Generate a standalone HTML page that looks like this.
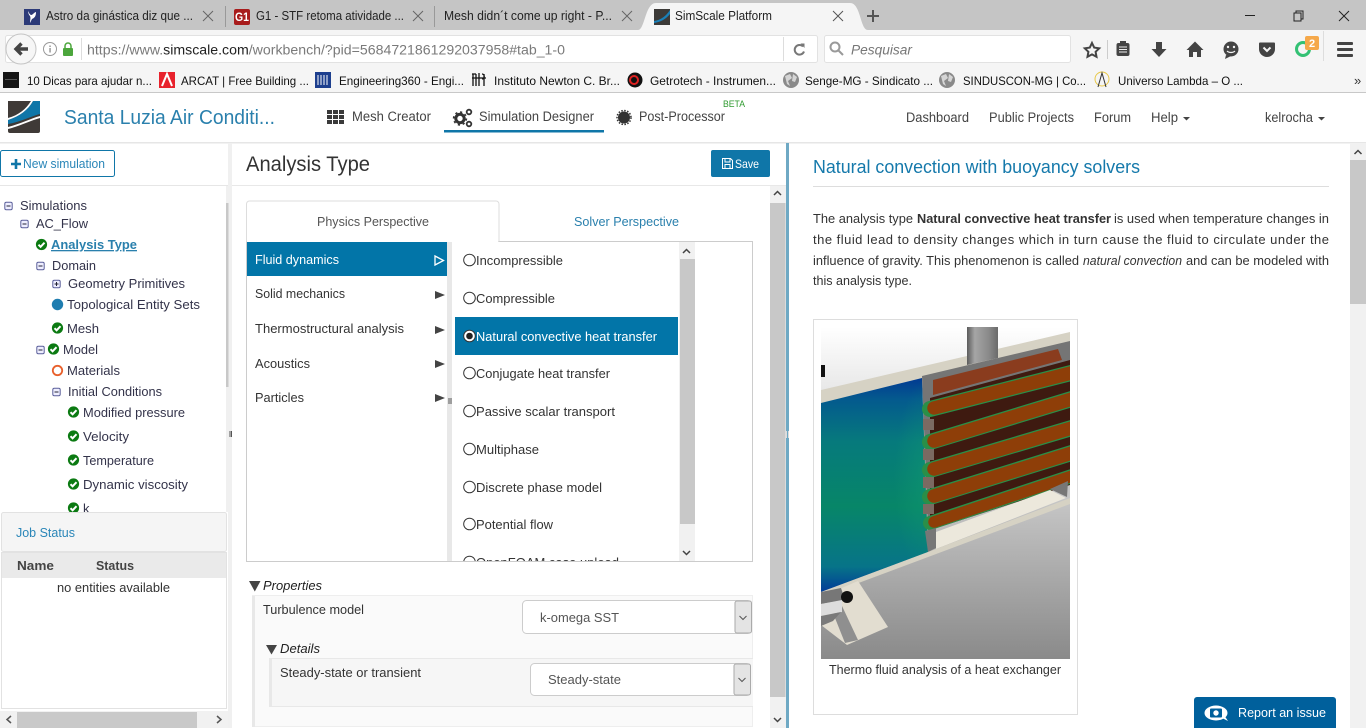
<!DOCTYPE html>
<html lang="pt"><head><meta charset="utf-8"><title>SimScale Platform</title>
<style>
html,body{margin:0;padding:0;background:#fff;overflow:hidden}
svg{display:block}
text{font-family:"Liberation Sans",sans-serif;font-size:13px;fill:#333;white-space:pre}
.tb{font-size:12.5px;fill:#222}
.bm{font-size:12px;fill:#111}
.tr{font-size:13px;fill:#33334a}
.nv{font-size:13.5px;fill:#444}
.mn{font-size:13px;fill:#333}
.op{font-size:12.5px;fill:#333}
.ar{fill:#444}
</style></head><body>
<svg xmlns="http://www.w3.org/2000/svg" width="1366" height="728" viewBox="0 0 1366 728">
<defs>
<g id="ck"><circle r="5.6" fill="#0b7a12"/><path d="M-3 .2 -.9 2.3 3 -1.8" fill="none" stroke="#fff" stroke-width="2"/></g>
<g id="mi"><rect x="-3.7" y="-3.7" width="7.4" height="7.4" rx="1.5" fill="#eef" stroke="#5a5f9a"/><path d="M-2 0H2" stroke="#223" stroke-width="1"/></g>
<g id="gl"><circle r="8" fill="#8a8a8a"/><path d="M-6 -4 -1 -6 1 -2 -3 1 -1 6 -4 4ZM2 -6 6 -3 4 2 1 1Z" fill="#d5d5d5"/></g>
<clipPath id="c1"><rect x="452" y="242" width="227" height="319"/></clipPath>
<clipPath id="c2"><rect x="821" y="327" width="249" height="332"/></clipPath>
<clipPath id="c3"><rect x="0" y="190" width="226" height="322"/></clipPath>
<linearGradient id="fl" gradientUnits="userSpaceOnUse" x1="0" y1="500" x2="0" y2="659"><stop offset="0" stop-color="#c6c6c6"/><stop offset="1" stop-color="#8a8a8a"/></linearGradient>
<linearGradient id="sk" x1="0" y1="0" x2="0" y2="1"><stop offset="0" stop-color="#fff"/><stop offset="1" stop-color="#e6e6e6"/></linearGradient>
<linearGradient id="bl" x1="0" y1="0" x2="0" y2="1"><stop offset="0" stop-color="#023a92"/><stop offset=".1" stop-color="#045a8e"/><stop offset=".3" stop-color="#067a7c"/><stop offset=".6" stop-color="#078668"/><stop offset=".88" stop-color="#077488"/><stop offset="1" stop-color="#023c98"/></linearGradient>
<radialGradient id="gr" cx="1" cy=".5" r=".5"><stop offset="0" stop-color="#14a070" stop-opacity=".45"/><stop offset="1" stop-color="#14a070" stop-opacity="0"/></radialGradient>
<linearGradient id="pp" x1="0" y1="0" x2="1" y2="0"><stop offset="0" stop-color="#5c5c5c"/><stop offset=".25" stop-color="#a5a5a5"/><stop offset=".7" stop-color="#8a8a8a"/><stop offset="1" stop-color="#6a6a6a"/></linearGradient>
</defs>

<!-- browser chrome -->
<rect width="1366" height="30" fill="#c5c5c5"/>
<rect y="30" width="1366" height="63" fill="#f5f5f5"/>
<rect y="92" width="1366" height="1" fill="#c8c8c8"/>
<path d="M638 30C645 30 645 3 656 3H850C861 3 860 30 868 30Z" fill="#f5f5f5"/>
<rect x="24" y="9" width="16" height="16" fill="#2c3a78"/><path d="M28 11c2 4 3 5 5 3s3-2 3-2c0 5-2 6-4 7l-2 4c0-3 1-5 0-7-1-1-2-3-2-5z" fill="#fff"/>
<text class="tb" x="46" y="20" textLength="147" lengthAdjust="spacingAndGlyphs">Astro da ginástica diz que ...</text>
<path d="M203 11 213 21M213 11 203 21" stroke="#666" fill="none"/>
<rect x="225" y="6" width="1" height="21" fill="#999"/>
<rect x="234" y="9" width="16" height="16" rx="2" fill="#a81c1c"/><text x="235" y="21" textLength="14" lengthAdjust="spacingAndGlyphs" style="font-size:12px;font-weight:bold;fill:#fff">G1</text>
<text class="tb" x="256" y="20" textLength="148" lengthAdjust="spacingAndGlyphs">G1 - STF retoma atividade ...</text>
<path d="M413 11 423 21M423 11 413 21" stroke="#666" fill="none"/>
<rect x="434" y="6" width="1" height="21" fill="#999"/>
<text class="tb" x="444" y="20" textLength="168" lengthAdjust="spacingAndGlyphs">Mesh didn´t come up right - P...</text>
<path d="M622 11 632 21M632 11 622 21" stroke="#666" fill="none"/>
<rect x="654" y="9" width="16" height="16" fill="#3c3a38"/><path d="M654 21C661 20 666 16 670 10V14C666 19 661 22 654 23Z" fill="#1a80b8"/>
<text class="tb" x="675" y="20" textLength="97" lengthAdjust="spacingAndGlyphs">SimScale Platform</text>
<path d="M833 11 843 21M843 11 833 21" stroke="#555" fill="none"/>
<path d="M873 10V22M867 16H879" stroke="#555" stroke-width="2"/>
<rect x="1245" y="15" width="10" height="1" fill="#222"/>
<path d="M1294 13h7v8h-7zM1296 13v-2h7v8h-2" fill="none" stroke="#222"/>
<path d="M1339 11 1349 21M1349 11 1339 21" stroke="#222" fill="none"/>

<rect x="5.500" y="35.500" width="812" height="27" rx="2" fill="#fff" stroke="#e2e2e2"/>
<circle cx="21" cy="49" r="15" fill="#f6f6f6" stroke="#c4c4c4"/>
<path d="M28 49H17M21.500 43.500 16 49 21.500 54.500" fill="none" stroke="#444" stroke-width="3.400"/>
<circle cx="50" cy="49" r="6.500" fill="none" stroke="#999"/><rect x="49.300" y="48" width="1.500" height="4.500" fill="#999"/><rect x="49.300" y="45.500" width="1.500" height="1.500" fill="#999"/>
<rect x="63" y="48" width="10" height="8" rx="1" fill="#4ca63c"/><path d="M65 48V46a3 3 0 0 1 6 0V48" fill="none" stroke="#4ca63c" stroke-width="1.500"/>
<rect x="81" y="38" width="1" height="22" fill="#ddd"/>
<text x="87" y="54.500" textLength="478" lengthAdjust="spacingAndGlyphs" style="font-size:13.5px;fill:#7a7a7a">https://www.<tspan fill="#222">simscale.com</tspan>/workbench/?pid=5684721861292037958#tab_1-0</text>
<rect x="783" y="37" width="1" height="24" fill="#ddd"/>
<path d="M803 46.500A4.800 4.800 0 1 0 804 51.500" fill="none" stroke="#777" stroke-width="2"/><path d="M800.500 43.500 804.500 43.500 804.500 48Z" fill="#777"/>
<rect x="824.500" y="35.500" width="246" height="27" rx="2" fill="#fff" stroke="#e2e2e2"/>
<circle cx="835" cy="47" r="4.500" fill="none" stroke="#999" stroke-width="2"/><path d="M838 50 843 55" stroke="#999" stroke-width="2"/>
<text x="851" y="54.500" textLength="61" lengthAdjust="spacingAndGlyphs" style="font-size:13.5px;font-style:italic;fill:#777">Pesquisar</text>
<path d="M1092 43l2.200 4.600 5 .7-3.600 3.500.9 5-4.500-2.400-4.500 2.400.9-5-3.600-3.500 5-.7z" fill="none" stroke="#444" stroke-width="2"/>
<rect x="1107" y="40" width="1" height="19" fill="#ccc"/>
<rect x="1116.500" y="43" width="13" height="13" rx="2" fill="#444"/><rect x="1120" y="41" width="6" height="3" fill="#444"/><path d="M1119 47h8M1119 49.500h8M1119 52h8" stroke="#eee" stroke-width="1"/>
<path d="M1156 42h6v7h4.500L1159 57l-7.500-8H1156z" fill="#444"/>
<path d="M1195 41.500 1203.500 50H1201V57H1197V52H1193V57H1189V50H1186.500z" fill="#444"/>
<circle cx="1231" cy="49" r="7.500" fill="#444"/><path d="M1226 55 1225 59 1231 56Z" fill="#444"/><circle cx="1228" cy="47" r="1.200" fill="#f5f5f5"/><circle cx="1234" cy="47" r="1.200" fill="#f5f5f5"/><path d="M1227 51c2 2 6 2 8 0" stroke="#f5f5f5" stroke-width="1.200" fill="none"/>
<path d="M1260 42.500h14a1 1 0 0 1 1 1V49a8 8 0 0 1-16 0V43.500a1 1 0 0 1 1-1z" fill="#444"/><path d="M1263.500 47.500 1267 51 1270.500 47.500" fill="none" stroke="#f5f5f5" stroke-width="2"/>
<circle cx="1303" cy="49" r="6.500" fill="none" stroke="#33c174" stroke-width="3"/>
<rect x="1305" y="36" width="14" height="14" rx="2" fill="#f5a84a"/><text x="1309" y="47" style="font-size:11px;font-weight:bold;fill:#fff">2</text>
<rect x="1323" y="31" width="1" height="30" fill="#ddd"/>
<rect x="1337" y="42" width="16" height="3" rx="1" fill="#444"/><rect x="1337" y="48" width="16" height="3" rx="1" fill="#444"/><rect x="1337" y="54" width="16" height="3" rx="1" fill="#444"/>

<!-- bookmarks -->
<rect x="3" y="72" width="16" height="16" fill="#151515"/><rect x="5" y="79" width="12" height="1" fill="#555"/>
<text class="bm" x="27" y="85" textLength="125" lengthAdjust="spacingAndGlyphs">10 Dicas para ajudar n...</text>
<rect x="159" y="72" width="16" height="16" fill="#e8222c"/><path d="M162 86 167 74 172 86" fill="none" stroke="#fff" stroke-width="2"/>
<text class="bm" x="181" y="85" textLength="128" lengthAdjust="spacingAndGlyphs">ARCAT | Free Building ...</text>
<rect x="315" y="72" width="16" height="16" fill="#1d3f8e"/><path d="M318 75v10M321 75v10M324 75v10M327 75v10" stroke="#fff"/>
<text class="bm" x="339" y="85" textLength="125" lengthAdjust="spacingAndGlyphs">Engineering360 - Engi...</text>
<path d="M472 74h4M473 74v12M476 74v12M479 73v13M482 74c3 0 3 5 0 5M484 74v12M472 78h14" stroke="#111" stroke-width="1.300" fill="none"/>
<text class="bm" x="494" y="85" textLength="126" lengthAdjust="spacingAndGlyphs">Instituto Newton C. Br...</text>
<circle cx="635" cy="80" r="7.500" fill="#111"/><circle cx="634" cy="80" r="4" fill="none" stroke="#d22" stroke-width="2"/>
<text class="bm" x="650" y="85" textLength="126" lengthAdjust="spacingAndGlyphs">Getrotech - Instrumen...</text>
<use href="#gl" x="791" y="80"/>
<text class="bm" x="805" y="85" textLength="128" lengthAdjust="spacingAndGlyphs">Senge-MG - Sindicato ...</text>
<use href="#gl" x="947" y="80"/>
<text class="bm" x="963" y="85" textLength="123" lengthAdjust="spacingAndGlyphs">SINDUSCON-MG | Co...</text>
<circle cx="1102" cy="79" r="7" fill="none" stroke="#e8c848"/><path d="M1098 87 1102 73 1106 87" fill="none" stroke="#333"/>
<text class="bm" x="1118" y="85" textLength="125" lengthAdjust="spacingAndGlyphs">Universo Lambda – O ...</text>
<text x="1354" y="85" style="font-size:13px;fill:#333">»</text>

<!-- app header -->
<rect y="93" width="1366" height="50" fill="#fff"/>
<rect y="142" width="1366" height="1.500" fill="#e6e6e6"/>
<path d="M8 101H40V131a2 2 0 0 1-2 2H10a2 2 0 0 1-2-2Z" fill="#3f3a37"/>
<path d="M40 101V114C32 116 20 122 8 124V120C20 116 28 110 33 101Z" fill="#0f76a8"/>
<path d="M33 101C28 110 20 116 8 120V118C19 115 26 109 31 101Z" fill="#fff"/>
<path d="M8 127C20 124 32 118 40 116V118C32 120 20 126 8 129Z" fill="#fff"/>
<text x="64" y="124" textLength="211" lengthAdjust="spacingAndGlyphs" style="font-size:20.5px;fill:#2a80ad">Santa Luzia Air Conditi...</text>
<g fill="#3a3a3a"><rect x="327" y="110" width="5" height="4"/><rect x="333" y="110" width="5" height="4"/><rect x="339" y="110" width="5" height="4"/><rect x="327" y="115" width="5" height="4"/><rect x="333" y="115" width="5" height="4"/><rect x="339" y="115" width="5" height="4"/><rect x="327" y="120" width="5" height="4"/><rect x="333" y="120" width="5" height="4"/><rect x="339" y="120" width="5" height="4"/></g>
<text class="nv" x="352" y="121" textLength="79" lengthAdjust="spacingAndGlyphs">Mesh Creator</text>
<circle cx="460" cy="118.500" r="4.200" fill="none" stroke="#333" stroke-width="3"/>
<circle cx="460" cy="118.500" r="6.400" fill="none" stroke="#333" stroke-width="1.600" stroke-dasharray="2.200 2.800"/>
<circle cx="469" cy="112" r="2.300" fill="none" stroke="#333" stroke-width="1.800"/>
<circle cx="469" cy="124" r="2.300" fill="none" stroke="#333" stroke-width="1.800"/>
<text class="nv" x="479" y="121" textLength="115" lengthAdjust="spacingAndGlyphs">Simulation Designer</text>
<rect x="444" y="130" width="160" height="2.500" fill="#0f76a8"/>
<circle cx="624" cy="117.500" r="6" fill="#333"/><circle cx="624" cy="117.500" r="7" fill="none" stroke="#333" stroke-width="1.500" stroke-dasharray="1.500 1.500"/>
<text class="nv" x="639" y="121" textLength="86" lengthAdjust="spacingAndGlyphs">Post-Processor</text>
<text x="723" y="107" textLength="22" lengthAdjust="spacingAndGlyphs" style="font-size:9px;fill:#2f9a2f">BETA</text>
<text class="nv" x="906" y="122" textLength="63" lengthAdjust="spacingAndGlyphs">Dashboard</text>
<text class="nv" x="989" y="122" textLength="85" lengthAdjust="spacingAndGlyphs">Public Projects</text>
<text class="nv" x="1094" y="122" textLength="37" lengthAdjust="spacingAndGlyphs">Forum</text>
<text class="nv" x="1151" y="122" textLength="27" lengthAdjust="spacingAndGlyphs">Help</text>
<path d="M1183 117h7l-3.500 3.500z" fill="#444"/>
<text class="nv" x="1265" y="122" textLength="48" lengthAdjust="spacingAndGlyphs">kelrocha</text>
<path d="M1318 117h7l-3.500 3.500z" fill="#444"/>

<!-- left panel -->
<rect x="228" y="143" width="4" height="585" fill="#f0f0f0"/>
<rect x=".5" y="150.500" width="114" height="26" rx="2" fill="#fff" stroke="#0f76a8"/>
<path d="M16 159V169M11 164H21" stroke="#0f76a8" stroke-width="2.600"/>
<text x="23" y="168" textLength="82" lengthAdjust="spacingAndGlyphs" style="font-size:12.5px;fill:#2a86b8">New simulation</text>
<rect y="185" width="228" height="1" fill="#e6e6e6"/>
<rect x="226" y="186" width="2.500" height="326" fill="#f0f0f0"/><rect x="226" y="203" width="2.500" height="184" fill="#c8c8c8"/>
<g clip-path="url(#c3)">
<use href="#mi" x="8.500" y="206"/><text class="tr" x="20" y="210" textLength="67" lengthAdjust="spacingAndGlyphs">Simulations</text>
<use href="#mi" x="24.500" y="224"/><text class="tr" x="36" y="228" textLength="52" lengthAdjust="spacingAndGlyphs">AC_Flow</text>
<use href="#ck" x="41.500" y="244.500"/><text x="51" y="249" textLength="86" lengthAdjust="spacingAndGlyphs" style="font-size:13px;font-weight:bold;fill:#2a80ad;text-decoration:underline">Analysis Type</text>
<use href="#mi" x="40.500" y="266"/><text class="tr" x="52" y="270" textLength="44" lengthAdjust="spacingAndGlyphs">Domain</text>
<use href="#mi" x="56.500" y="284"/><path d="M56.500 282V286" stroke="#223"/><text class="tr" x="68" y="288" textLength="117" lengthAdjust="spacingAndGlyphs">Geometry Primitives</text>
<circle cx="57.500" cy="304.500" r="5.700" fill="#1f7db0"/><text class="tr" x="67" y="309" textLength="133" lengthAdjust="spacingAndGlyphs">Topological Entity Sets</text>
<use href="#ck" x="57.500" y="328"/><text class="tr" x="67" y="333" textLength="32" lengthAdjust="spacingAndGlyphs">Mesh</text>
<use href="#mi" x="40.500" y="350"/><use href="#ck" x="53.500" y="349"/><text class="tr" x="63" y="354" textLength="35" lengthAdjust="spacingAndGlyphs">Model</text>
<circle cx="57.500" cy="370.500" r="4.700" fill="none" stroke="#e8602c" stroke-width="1.800"/><text class="tr" x="67" y="375" textLength="53" lengthAdjust="spacingAndGlyphs">Materials</text>
<use href="#mi" x="56.500" y="392"/><text class="tr" x="68" y="396" textLength="94" lengthAdjust="spacingAndGlyphs">Initial Conditions</text>
<use href="#ck" x="73.500" y="412"/><text class="tr" x="83" y="417" textLength="102" lengthAdjust="spacingAndGlyphs">Modified pressure</text>
<use href="#ck" x="73.500" y="436"/><text class="tr" x="83" y="441" textLength="46" lengthAdjust="spacingAndGlyphs">Velocity</text>
<use href="#ck" x="73.500" y="460"/><text class="tr" x="83" y="465" textLength="71" lengthAdjust="spacingAndGlyphs">Temperature</text>
<use href="#ck" x="73.500" y="484"/><text class="tr" x="83" y="489" textLength="105" lengthAdjust="spacingAndGlyphs">Dynamic viscosity</text>
<use href="#ck" x="73.500" y="508"/><text class="tr" x="83" y="513">k</text>
</g>
<path d="M230 431v6M231.500 431v6" stroke="#555"/>
<rect x="1.500" y="512.500" width="225" height="39" rx="2" fill="#f5f5f5" stroke="#e2e2e2"/>
<text x="16" y="537" textLength="59" lengthAdjust="spacingAndGlyphs" style="font-size:13px;fill:#2a86b8">Job Status</text>
<rect x="1.500" y="552.500" width="225" height="156" fill="#fff" stroke="#e2e2e2"/>
<rect x="2" y="553" width="224" height="25" fill="#eaeaea"/>
<text x="17" y="570" textLength="37" lengthAdjust="spacingAndGlyphs" style="font-size:13px;font-weight:bold;fill:#444">Name</text>
<text x="96" y="570" textLength="38" lengthAdjust="spacingAndGlyphs" style="font-size:13px;font-weight:bold;fill:#444">Status</text>
<text x="57" y="592" textLength="113" lengthAdjust="spacingAndGlyphs" style="font-size:12.5px;fill:#333">no entities available</text>
<rect y="711" width="228" height="17" fill="#f1f1f1"/>
<rect x="17" y="712" width="180" height="16" fill="#c9c9c9"/>
<path d="M11 716 7 719.500 11 723" fill="none" stroke="#555" stroke-width="1.500"/><path d="M217 716 221 719.500 217 723" fill="none" stroke="#555" stroke-width="1.500"/>

<!-- center panel -->
<text x="246" y="171" textLength="124" lengthAdjust="spacingAndGlyphs" style="font-size:21px;fill:#333">Analysis Type</text>
<rect x="232" y="185" width="554" height="1" fill="#e8e8e8"/>
<rect x="711" y="150" width="59" height="27" rx="2" fill="#0f76a8"/>
<path d="M722.500 158.500h8l2 2v8h-10z M725 159v3h5v-3 M725 168.500v-4h5v4" fill="none" stroke="#fff"/>
<text x="735" y="168" textLength="24" lengthAdjust="spacingAndGlyphs" style="font-size:12px;fill:#fff">Save</text>

<rect x="246.500" y="241.500" width="506" height="320" fill="#fff" stroke="#ccc"/>
<path d="M246.500 241.500V204a3 3 0 0 1 3-3H496a3 3 0 0 1 3 3V241.500" fill="#fff" stroke="#ddd"/>
<rect x="247" y="240" width="251" height="3" fill="#fff"/>
<text x="317" y="226" textLength="112" lengthAdjust="spacingAndGlyphs" style="font-size:13px;fill:#555">Physics Perspective</text>
<text x="574" y="226" textLength="105" lengthAdjust="spacingAndGlyphs" style="font-size:13px;fill:#2a80ad">Solver Perspective</text>
<rect x="247" y="242" width="200" height="34" fill="#0275a8"/>
<rect x="447" y="242" width="5" height="319" fill="#e8e8e8"/>
<text class="mn" x="255" y="264" textLength="84" lengthAdjust="spacingAndGlyphs" style="fill:#fff">Fluid dynamics</text>
<path d="M435 256 443.500 260.500 435 265Z" fill="#0275a8" stroke="#fff" stroke-width="1.300"/>
<text class="mn" x="255" y="298" textLength="90" lengthAdjust="spacingAndGlyphs">Solid mechanics</text><path class="ar" d="M435 291 445 295 435 299Z"/>
<text class="mn" x="255" y="333" textLength="149" lengthAdjust="spacingAndGlyphs">Thermostructural analysis</text><path class="ar" d="M435 326 445 330 435 334Z"/>
<text class="mn" x="255" y="368" textLength="55" lengthAdjust="spacingAndGlyphs">Acoustics</text><path class="ar" d="M435 360 445 364 435 368Z"/>
<text class="mn" x="255" y="402" textLength="49" lengthAdjust="spacingAndGlyphs">Particles</text><path class="ar" d="M435 394 445 398 435 402Z"/>
<path d="M449 398v6M451 398v6" stroke="#555"/>
<rect x="455" y="317" width="223" height="38" fill="#0275a8"/>
<g clip-path="url(#c1)" fill="#fff" stroke="#333">
<circle cx="469.500" cy="260" r="5.800"/><circle cx="469.500" cy="298" r="5.800"/><circle cx="469.500" cy="336" r="5.800"/><circle cx="469.500" cy="373" r="5.800"/><circle cx="469.500" cy="411" r="5.800"/><circle cx="469.500" cy="449" r="5.800"/><circle cx="469.500" cy="487" r="5.800"/><circle cx="469.500" cy="524" r="5.800"/><circle cx="469.500" cy="562" r="5.800"/>
<circle cx="469.500" cy="336" r="3.300" fill="#222" stroke="none"/>
<text class="op" stroke="none" x="476" y="265" textLength="87" lengthAdjust="spacingAndGlyphs">Incompressible</text>
<text class="op" stroke="none" x="476" y="303" textLength="79" lengthAdjust="spacingAndGlyphs">Compressible</text>
<text class="op" stroke="none" x="476" y="341" textLength="181" lengthAdjust="spacingAndGlyphs" style="fill:#fff">Natural convective heat transfer</text>
<text class="op" stroke="none" x="476" y="378" textLength="134" lengthAdjust="spacingAndGlyphs">Conjugate heat transfer</text>
<text class="op" stroke="none" x="476" y="416" textLength="139" lengthAdjust="spacingAndGlyphs">Passive scalar transport</text>
<text class="op" stroke="none" x="476" y="454" textLength="63" lengthAdjust="spacingAndGlyphs">Multiphase</text>
<text class="op" stroke="none" x="476" y="492" textLength="126" lengthAdjust="spacingAndGlyphs">Discrete phase model</text>
<text class="op" stroke="none" x="476" y="529" textLength="77" lengthAdjust="spacingAndGlyphs">Potential flow</text>
<text class="op" stroke="none" x="476" y="567" textLength="143" lengthAdjust="spacingAndGlyphs">OpenFOAM case upload</text>
</g>
<rect x="679" y="242" width="16" height="319" fill="#f1f1f1"/>
<rect x="680" y="259" width="15" height="265" fill="#c8c8c8"/>
<path d="M683 253 686.500 249.500 690 253" fill="none" stroke="#444" stroke-width="1.500"/>
<path d="M683 551 686.500 554.500 690 551" fill="none" stroke="#444" stroke-width="1.500"/>

<!-- main scrollbar -->
<rect x="770" y="186" width="16" height="542" fill="#f1f1f1"/>
<rect x="770" y="203" width="15.500" height="494" fill="#c8c8c8"/>
<path d="M774 195 777.500 191.500 781 195" fill="none" stroke="#444" stroke-width="1.500"/>
<path d="M774 718 777.500 721.500 781 718" fill="none" stroke="#444" stroke-width="1.500"/>
<rect x="786" y="143" width="3" height="585" fill="#6fa9c4"/>
<path d="M786.500 431v7M788.500 431v7" stroke="#ddd"/>

<!-- properties -->
<path d="M249 581H260.500L254.800 591.500Z" fill="#444"/>
<text x="263" y="590" textLength="59" lengthAdjust="spacingAndGlyphs" style="font-size:13px;font-style:italic;fill:#222">Properties</text>
<rect x="252.500" y="595.500" width="500" height="131" fill="#fafafa" stroke="#eee"/>
<rect x="252" y="596" width="3" height="131" fill="#e8e8e8"/>
<text x="263" y="614" textLength="101" lengthAdjust="spacingAndGlyphs" style="font-size:13px;fill:#333">Turbulence model</text>
<rect x="522.500" y="600.500" width="229" height="33" rx="4" fill="#fff" stroke="#ccc"/>
<rect x="735" y="601" width="16.500" height="32" rx="2" fill="#e4e4e4" stroke="#aaa"/>
<path d="M739.500 616 743 619.500 746.500 616" fill="none" stroke="#555"/>
<text x="540" y="622" textLength="79" lengthAdjust="spacingAndGlyphs" style="font-size:13px;fill:#555">k-omega SST</text>
<path d="M266 645H277L271.500 654.500Z" fill="#444"/>
<text x="280" y="653" textLength="40" lengthAdjust="spacingAndGlyphs" style="font-size:13px;font-style:italic;fill:#222">Details</text>
<rect x="269" y="658" width="484" height="49" fill="#f6f6f6"/>
<rect x="269" y="658" width="484" height="1" fill="#e8e8e8"/><rect x="269" y="706" width="484" height="1" fill="#e8e8e8"/>
<rect x="269" y="658" width="3" height="49" fill="#e8e8e8"/>
<text x="280" y="677" textLength="141" lengthAdjust="spacingAndGlyphs" style="font-size:13px;fill:#333">Steady-state or transient</text>
<rect x="530.500" y="663.500" width="220" height="32" rx="4" fill="#fff" stroke="#ccc"/>
<rect x="734" y="664" width="16.500" height="31" rx="2" fill="#e4e4e4" stroke="#aaa"/>
<path d="M738.500 678 742 681.500 745.500 678" fill="none" stroke="#555"/>
<text x="548" y="684" textLength="73" lengthAdjust="spacingAndGlyphs" style="font-size:13px;fill:#555">Steady-state</text>

<!-- right panel -->
<text x="813" y="173" textLength="327" lengthAdjust="spacingAndGlyphs" style="font-size:18px;fill:#1579ab">Natural convection with buoyancy solvers</text>
<rect x="813" y="186" width="516" height="1" fill="#ddd"/>
<text x="813" y="223" textLength="100" lengthAdjust="spacingAndGlyphs">The analysis type</text>
<text x="917" y="223" textLength="194" lengthAdjust="spacingAndGlyphs" style="font-weight:bold;font-size:13px">Natural convective heat transfer</text>
<text x="1114" y="223" textLength="215" lengthAdjust="spacingAndGlyphs">is used when temperature changes in</text>
<text x="813" y="244" textLength="516" lengthAdjust="spacing">the fluid lead to density changes which in turn cause the fluid to circulate under the</text>
<text x="813" y="265" textLength="266" lengthAdjust="spacingAndGlyphs">influence of gravity. This phenomenon is called</text>
<text x="1083" y="265" textLength="99" lengthAdjust="spacingAndGlyphs" style="font-style:italic;font-size:13px">natural convection</text>
<text x="1186" y="265" textLength="143" lengthAdjust="spacingAndGlyphs">and can be modeled with</text>
<text x="813" y="285" textLength="99" lengthAdjust="spacingAndGlyphs">this analysis type.</text>

<rect x="813.500" y="319.500" width="264" height="395" fill="#fff" stroke="#ddd"/>
<g clip-path="url(#c2)">
<rect x="821" y="327" width="249" height="332" fill="url(#fl)"/>
<path d="M821 327H1070V335L821 395Z" fill="url(#sk)"/>
<path d="M821 390 1070 332V345L821 403Z" fill="#d6d2c4"/>
<rect x="821" y="365" width="4" height="12" fill="#111"/>
<path d="M967 327H998V358L967 365Z" fill="url(#pp)"/>
<path d="M821 403 922 378 928 552 821 592Z" fill="url(#bl)"/>
<path d="M860 390 922 378 928 552 860 578Z" fill="url(#gr)"/>
<path d="M922 376 1070 341V480L928 530Z" fill="#757575"/>
<path d="M933 380 1058 349 1062 360 933 395Z" fill="#8a3c1e"/>
<path d="M930 398 1070 360V485L930 530Z" fill="#3e1a10"/>
<g fill="none" stroke-linecap="round">
<path d="M930 409 1075 372" stroke="#2a8f48" stroke-width="16"/>
<path d="M934 408 1075 372" stroke="#8e3e08" stroke-width="13.500"/>
<path d="M930 442 1075 398" stroke="#2a8f48" stroke-width="16"/>
<path d="M934 441 1075 398" stroke="#8e3e08" stroke-width="13.500"/>
<path d="M930 470 1075 427" stroke="#2a8f48" stroke-width="16"/>
<path d="M934 469 1075 427" stroke="#8e3e08" stroke-width="13.500"/>
<path d="M930 497 1075 452" stroke="#2a8f48" stroke-width="16"/>
<path d="M934 496 1075 452" stroke="#8e3e08" stroke-width="13.500"/>
<path d="M930 523 1075 475" stroke="#2a8f48" stroke-width="14"/>
<path d="M934 522 1075 475" stroke="#8e3e08" stroke-width="11.500"/>
</g>
<g fill="#7b6a62"><rect x="923" y="419" width="11" height="11"/><rect x="923" y="449" width="11" height="11"/><rect x="923" y="477" width="11" height="11"/><rect x="923" y="504" width="11" height="10"/></g>
<path d="M936 532 1050 490 1066 498 936 549Z" fill="#ece8dc"/>
<path d="M925 531 936 528V548L928 552Z" fill="#777"/>
<path d="M1050 489 1068 481 1067 497Z" fill="#777"/>
<path d="M821 592 928 552 1070 498V504L821 597Z" fill="#d6d2c4"/>
<path d="M821 597 858 581 888 627 847 645 821 625Z" fill="#e2ddd0"/>
<path d="M833 613 842 606 858 640 845 643Z" fill="#8f8f8f"/>
<path d="M821 592 841 588 845 600 821 604Z" fill="#777"/>
<path d="M821 604 842 600V612L821 616Z" fill="#ddd"/>
<path d="M821 616 841 612 833 621 821 626Z" fill="#7a7a7a"/>
<circle cx="847" cy="597" r="6" fill="#111"/>
</g>
<text x="829" y="674" textLength="232" lengthAdjust="spacingAndGlyphs" style="font-size:13px;fill:#333">Thermo fluid analysis of a heat exchanger</text>

<rect x="1350" y="143" width="16" height="585" fill="#f1f1f1"/>
<rect x="1350" y="160" width="16" height="144" fill="#c8c8c8"/>
<path d="M1354.500 154 1358 150.500 1361.500 154" fill="none" stroke="#444" stroke-width="1.500"/>

<path d="M1194 728V700a3 3 0 0 1 3-3H1333a3 3 0 0 1 3 3V728Z" fill="#00609c"/>
<ellipse cx="1216" cy="713" rx="11.500" ry="7.500" fill="#fff"/><path d="M1222 718 1228 721 1224 715Z" fill="#fff"/>
<rect x="1210" y="708.500" width="12" height="9" rx="1" fill="#00609c"/><circle cx="1216" cy="713" r="2.700" fill="#fff"/>
<text x="1238" y="717" textLength="88" lengthAdjust="spacingAndGlyphs" style="font-size:12.5px;fill:#fff">Report an issue</text>
</svg>
</body></html>
